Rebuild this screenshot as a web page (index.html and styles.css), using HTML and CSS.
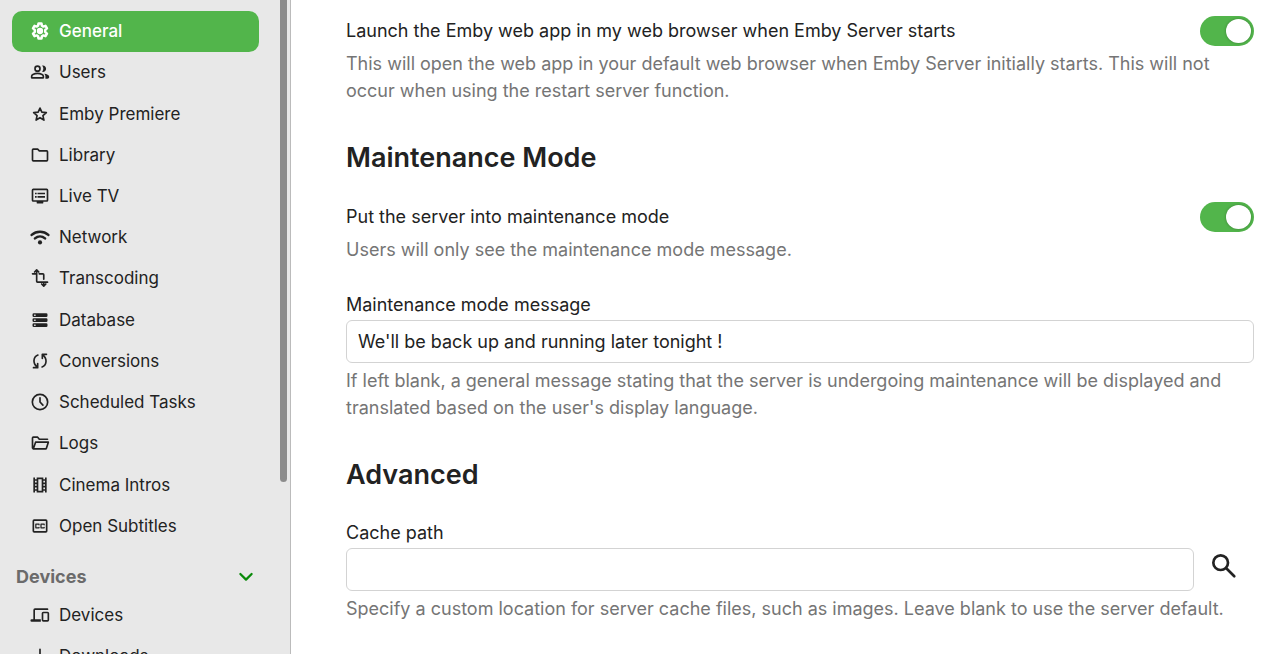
FILE: index.html
```html
<!DOCTYPE html>
<html lang="en">
<head>
<meta charset="utf-8">
<meta name="viewport" content="width=device-width, initial-scale=1">
<title>General settings</title>
<link rel="stylesheet" href="styles.css">
</head>
<body>
<div class="app">
  <aside class="sidebar">
    <nav class="nav">
      <div class="nav-list nav-server">
        <a class="nav-item active" href="#general"><svg class="icon" viewBox="0 0 24 24"><path class="line gear" d="M10.200 3h3.600l.5 2.700 1.700 1 2.600-.9 1.800 3.100-2.100 1.800v2.600l2.100 1.800-1.800 3.100-2.600-.9-1.700 1-.5 2.700h-3.600l-.5-2.700-1.700-1-2.600.9-1.800-3.100 2.100-1.800v-2.600L3.600 8.900l1.800-3.100 2.600.9 1.700-1z"/><circle cx="12" cy="12" r="3.800"/></svg>General</a>
        <a class="nav-item" href="#users"><svg class="icon" viewBox="0 0 24 24"><circle class="line" cx="9" cy="8" r="3"/><path class="line" d="M2 19v-1.800c0-1 .6-1.900 1.500-2.300C7.200 13.300 10.800 13.300 14.500 14.900c.9.400 1.500 1.300 1.500 2.300V19z"/><path d="M14.500 11.800c2-2.300 2-5.300 0-7.600 2.600-.7 4.800 1.200 4.800 3.800s-2.200 4.500-4.800 3.800zM18.500 20v-3c0-1.200-.6-2.200-1.500-3 3.300.5 6 1.300 6 3.400V18c0 1.100-.9 2-2 2z"/></svg>Users</a>
        <a class="nav-item" href="#premiere"><svg class="icon" viewBox="0 0 24 24"><path class="line" d="m12 4.800 2.200 5 5.400.5-4.100 3.600 1.200 5.400-4.700-2.900-4.700 2.900 1.200-5.400-4.100-3.600 5.400-.5z"/></svg>Emby Premiere</a>
        <a class="nav-item" href="#library"><svg class="icon" viewBox="0 0 24 24"><path class="line" d="M4 5h5.200l2 2H20a1 1 0 0 1 1 1v10a1 1 0 0 1-1 1H4a1 1 0 0 1-1-1V6a1 1 0 0 1 1-1z"/></svg>Library</a>
        <a class="nav-item" href="#livetv"><svg class="icon" viewBox="0 0 24 24"><path class="line" d="M4 4h16a1 1 0 0 1 1 1v12a1 1 0 0 1-1 1H4a1 1 0 0 1-1-1V5a1 1 0 0 1 1-1z"/><path d="M8 18h8v2a1 1 0 0 1-1 1H9a1 1 0 0 1-1-1zM6 8h2v2H6zm3 0h9v2H9zm-3 4h2v2H6zm3 0h9v2H9z"/></svg>Live TV</a>
        <a class="nav-item" href="#network"><svg class="icon" viewBox="0 0 24 24"><path class="line thick" d="M2 9.500c5.700-5 14.300-5 20 0M6 13.700c3.500-3 8.500-3 12 0"/><circle cx="12" cy="18.500" r="2.500"/></svg>Network</a>
        <a class="nav-item" href="#transcoding"><svg class="icon" viewBox="0 0 24 24"><path class="line" d="M3 7h5M8 3v13a1 1 0 0 0 1 1h12M11 7h4.500a1 1 0 0 1 1 1v5.500M16.500 18v3M5.500 4.800 8 2.300l2.500 2.500M14 19.200l2.500 2.500 2.500-2.500"/></svg>Transcoding</a>
        <a class="nav-item" href="#database"><svg class="icon" viewBox="0 0 24 24"><path fill-rule="evenodd" d="M4.500 4h15a1.500 1.500 0 0 1 1.500 1.500V7a1.500 1.500 0 0 1-1.500 1.500h-15A1.500 1.500 0 0 1 3 7V5.500A1.500 1.500 0 0 1 4.500 4zM5 5.400v1.700h1.700V5.400zM4.500 10h15a1.500 1.500 0 0 1 1.500 1.500V13a1.500 1.500 0 0 1-1.500 1.500h-15A1.500 1.500 0 0 1 3 13v-1.500A1.500 1.500 0 0 1 4.500 10zm.5 1.400v1.700h1.700v-1.700zM4.500 16h15a1.500 1.500 0 0 1 1.500 1.500V19a1.500 1.500 0 0 1-1.500 1.500h-15A1.500 1.500 0 0 1 3 19v-1.500A1.500 1.500 0 0 1 4.500 16zm.5 1.400v1.700h1.700v-1.700z"/></svg>Database</a>
        <a class="nav-item" href="#conversions"><svg class="icon" viewBox="0 0 24 24"><path class="line" d="M9.500 4.800C3.800 7 3 14.500 8.500 19M4.200 20h5v-5M14.500 19.200c5.700-2.200 6.500-9.700 1-14.200M19.800 4h-5v5"/></svg>Conversions</a>
        <a class="nav-item" href="#tasks"><svg class="icon" viewBox="0 0 24 24"><circle class="line" cx="12" cy="12" r="9.200"/><path class="line" d="M12 7v5l3.500 3.700"/></svg>Scheduled Tasks</a>
        <a class="nav-item" href="#logs"><svg class="icon" viewBox="0 0 24 24"><path class="line" d="M21 7.500h-9.800l-2-2.500H4a1 1 0 0 0-1 1v12l1 1 2.700-8H22l-2.300 7.300a1 1 0 0 1-1 .7H4"/></svg>Logs</a>
        <a class="nav-item" href="#intros"><svg class="icon" viewBox="0 0 24 24"><path fill-rule="evenodd" d="M4 3h2v2h2V3h8v2h2V3h2v18h-2v-2h-2v2H8v-2H6v2H4zm2 4v2h2V7zm0 4v2h2v-2zm0 4v2h2v-2zm10-8v2h2V7zm0 4v2h2v-2zm0 4v2h2v-2zM10 5v14h4V5z"/></svg>Cinema Intros</a>
        <a class="nav-item" href="#subtitles"><svg class="icon" viewBox="0 0 24 24"><rect class="line" x="4" y="5" width="16" height="14" rx="1"/><path class="line thin" d="M10.800 10.500V9.800H7v4.400h3.800v-.7M17 10.500V9.800h-3.800v4.400H17v-.7"/></svg>Open Subtitles</a>
      </div>
      <button class="nav-heading" type="button" aria-expanded="true">Devices<svg class="icon chevron" viewBox="0 0 24 24"><path class="line thick" d="m4.500 8 7.500 7.500L19.500 8"/></svg></button>
      <div class="nav-list">
        <a class="nav-item" href="#devices"><svg class="icon" viewBox="0 0 24 24"><path d="M4 6a2 2 0 0 1 2-2h15a1 1 0 0 1 0 2H6v11h7v3H2a1.500 1.500 0 0 1 0-3h2z"/><rect class="line" x="15" y="9" width="7" height="10" rx="1"/></svg>Devices</a>
        <a class="nav-item" href="#downloads"><svg class="icon" viewBox="0 0 24 24"><path class="line" d="M12 4v11M7.500 11l4.500 4.500 4.500-4.500M5 16v3h14v-3"/></svg>Downloads</a>
      </div>
    </nav>
    <div class="scroll-track"><div class="scroll-thumb"></div></div>
  </aside>
  <main class="content">
    <section class="setting">
      <div class="setting-row">
        <label for="launch">Launch the Emby web app in my web browser when Emby Server starts</label>
        <input class="toggle" type="checkbox" id="launch" checked>
      </div>
      <p class="help">This will open the web app in your default web browser when Emby Server initially starts. This will not occur when using the restart server function.</p>
    </section>
    <h2>Maintenance Mode</h2>
    <section class="setting">
      <div class="setting-row">
        <label for="maintenance">Put the server into maintenance mode</label>
        <input class="toggle" type="checkbox" id="maintenance" checked>
      </div>
      <p class="help">Users will only see the maintenance mode message.</p>
    </section>
    <section class="setting field">
      <label for="message">Maintenance mode message</label>
      <input class="text-input" type="text" id="message" value="We'll be back up and running later tonight !">
      <p class="help">If left blank, a general message stating that the server is undergoing maintenance will be displayed and translated based on the user's display language.</p>
    </section>
    <h2>Advanced</h2>
    <section class="setting">
      <label for="cache">Cache path</label>
      <div class="input-row">
        <input class="text-input" type="text" id="cache">
        <button class="search" type="button" aria-label="Browse"><svg class="search-icon" viewBox="0 0 24 24"><circle class="line" cx="9.500" cy="9.500" r="5.500"/><path class="line" d="m13.700 13.700 6 6"/></svg></button>
      </div>
      <p class="help">Specify a custom location for server cache files, such as images. Leave blank to use the server default.</p>
    </section>
  </main>
</div>
</body>
</html>
```
FILE: styles.css
```css
* {
  box-sizing: border-box;
}

body {
  margin: 0;
  background: #fff;
  color: #222;
  font-family: Inter, "Liberation Sans", sans-serif;
  font-size: 18px;
  line-height: 28px;
}

.app {
  display: flex;
  height: 100vh;
  overflow: hidden;
}

.sidebar {
  display: flex;
  flex: 0 0 291px;
  background: #e8e8e8;
  border-right: 1px solid #bbb;
  overflow: hidden;
}

.nav {
  flex: 1;
  padding: 11px 21px 0 12px;
}

.nav-list {
  display: grid;
  grid-auto-rows: 41px;
}

.nav-server {
  grid-auto-rows: 1fr;
  min-height: 536px;
}

.nav-item {
  display: flex;
  align-items: center;
  gap: 9px;
  padding: 0 0 1px 18px;
  border-radius: 10px;
  color: #222;
  font-size: 17px;
  text-decoration: none;
}

.active {
  background: #52b54b;
  color: #fff;
  font-weight: 500;
}

.icon {
  flex: none;
  width: 20px;
  height: 20px;
  fill: currentColor;
}

.line {
  fill: none;
  stroke: currentColor;
  stroke-width: 2;
  stroke-linecap: round;
  stroke-linejoin: round;
}

.gear,
.thick {
  stroke-width: 3;
}

.thin {
  stroke-width: 1.5;
}

.nav-heading {
  display: flex;
  align-items: center;
  justify-content: space-between;
  width: 100%;
  height: 48px;
  padding: 11px 4px 0;
  border: 0;
  background: none;
  color: #6b6b6b;
  font: 700 18px/28px Inter, "Liberation Sans", sans-serif;
}

.chevron {
  width: 18px;
  height: 18px;
  color: #0a8a0a;
}

.scroll-track {
  flex: 0 0 10px;
}

.scroll-thumb {
  width: 7px;
  height: 482px;
  border-radius: 0 0 4px 4px;
  background: #8c8c8c;
}

.content {
  flex: 1;
  min-width: 0;
  padding: 16px 29px 32px 55px;
}

.setting-row {
  display: flex;
  align-items: center;
  justify-content: space-between;
  height: 30px;
}

.setting label {
  display: block;
}

.help {
  margin: 4px 0 0;
  color: #757575;
  line-height: 27px;
}

.field {
  margin-top: 28px;
}

h2 {
  margin: 37px 0 27px;
  font-size: 27px;
  font-weight: 600;
  line-height: 34px;
}

.toggle {
  flex: none;
  appearance: none;
  display: flex;
  width: 54px;
  height: 30px;
  margin: 0;
  padding: 3px;
  border-radius: 15px;
  background: #52b54b;
}

.toggle::before {
  content: "";
  width: 25px;
  height: 24px;
  border-radius: 50%;
  background: #fff;
  box-shadow: 0 0 3px rgba(0, 0, 0, 0.3);
}

.toggle:checked {
  justify-content: flex-end;
}

.text-input {
  display: block;
  flex: 1;
  width: 100%;
  min-width: 0;
  height: 43px;
  margin-top: 1px;
  padding: 0 11px;
  border: 1px solid #d3d3d3;
  border-radius: 6px;
  background: #fff;
  color: #222;
  font: inherit;
}

.input-row {
  display: flex;
  gap: 14px;
}

.search {
  width: 46px;
  height: 36px;
  padding: 2px 0 0;
  border: 0;
  background: none;
  color: #222;
}

.search-icon {
  display: block;
  width: 32px;
  height: 32px;
}
```
